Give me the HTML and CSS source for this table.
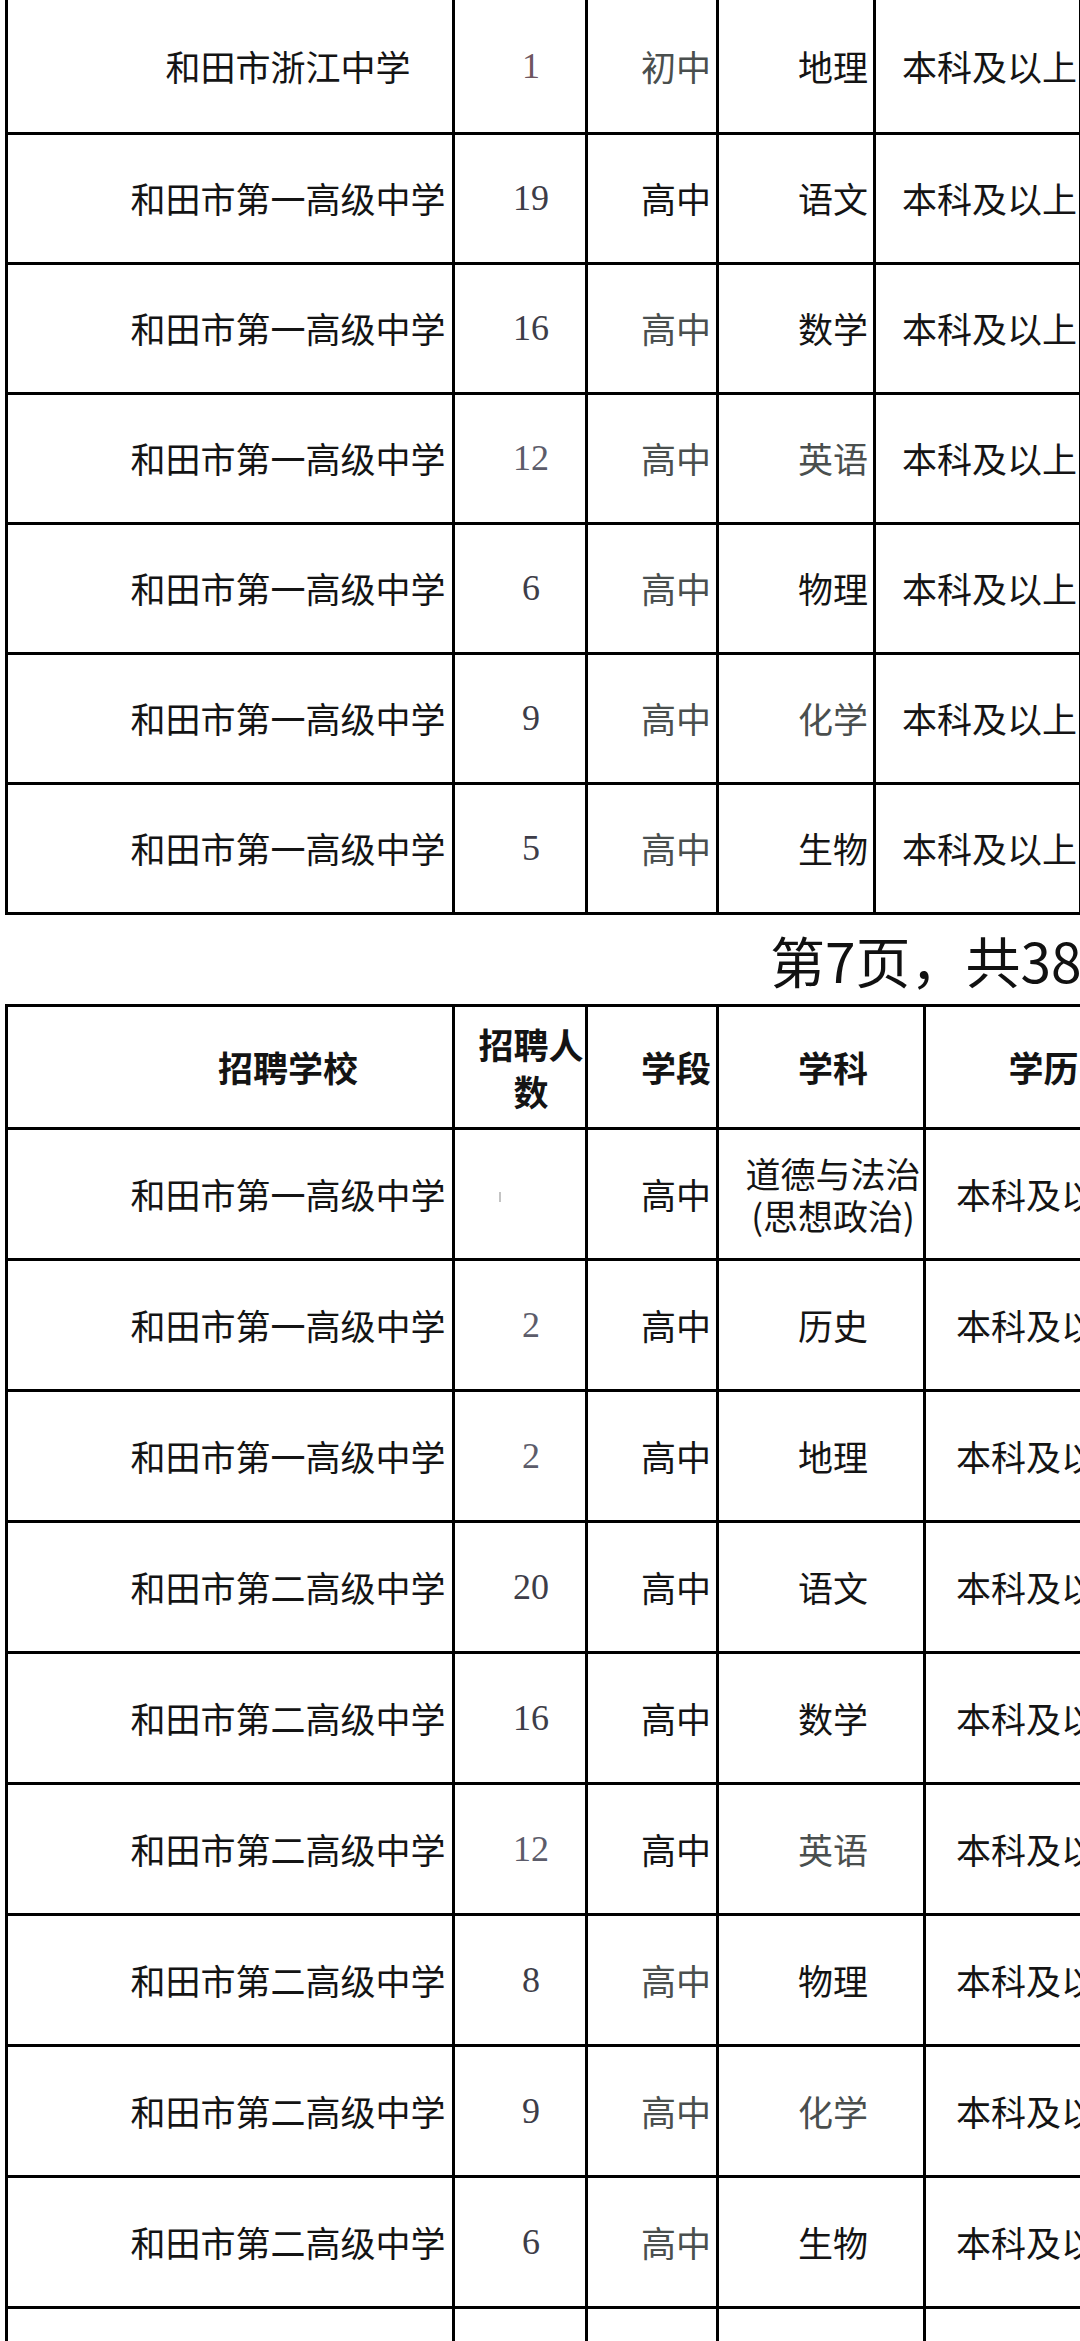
FILE: index.html
```html
<!DOCTYPE html>
<html lang="zh-CN">
<head>
<meta charset="utf-8">
<title>招聘岗位表</title>
<link rel="stylesheet" href="styles.css">
</head>
<body>
<div class="page">
  <table class="grid top">
    <colgroup>
      <col class="c-school"><col class="c-num"><col class="c-stage"><col class="c-subj-top"><col class="c-edu-top">
    </colgroup>
    <tbody>
      <tr class="first"><td class="school">和田市浙江中学</td><td class="num brown">1</td><td class="stage gray">初中</td><td class="subj-r">地理</td><td class="edu">本科及以上</td></tr>
      <tr><td class="school">和田市第一高级中学</td><td class="num">19</td><td class="stage">高中</td><td class="subj-r">语文</td><td class="edu">本科及以上</td></tr>
      <tr><td class="school">和田市第一高级中学</td><td class="num">16</td><td class="stage gray">高中</td><td class="subj-r">数学</td><td class="edu">本科及以上</td></tr>
      <tr><td class="school">和田市第一高级中学</td><td class="num light">12</td><td class="stage gray">高中</td><td class="subj-r gray">英语</td><td class="edu">本科及以上</td></tr>
      <tr><td class="school">和田市第一高级中学</td><td class="num">6</td><td class="stage gray">高中</td><td class="subj-r">物理</td><td class="edu">本科及以上</td></tr>
      <tr><td class="school">和田市第一高级中学</td><td class="num">9</td><td class="stage gray">高中</td><td class="subj-r gray">化学</td><td class="edu">本科及以上</td></tr>
      <tr><td class="school">和田市第一高级中学</td><td class="num">5</td><td class="stage gray">高中</td><td class="subj-r">生物</td><td class="edu">本科及以上</td></tr>
    </tbody>
  </table>

  <div class="pageno">第7页，共38页</div>

  <table class="grid bottom">
    <colgroup>
      <col class="c-school"><col class="c-num"><col class="c-stage"><col class="c-subj"><col class="c-edu">
    </colgroup>
    <thead>
      <tr class="head"><th class="school">招聘学校</th><th class="num-h">招聘人<br>数</th><th class="stage">学段</th><th class="subj">学科</th><th class="edu">学历</th></tr>
    </thead>
    <tbody>
      <tr><td class="school">和田市第一高级中学</td><td class="num"><span class="tick"></span></td><td class="stage">高中</td><td class="subj two">道德与法治<br>(思想政治)</td><td class="edu">本科及以上</td></tr>
      <tr><td class="school">和田市第一高级中学</td><td class="num light">2</td><td class="stage">高中</td><td class="subj">历史</td><td class="edu">本科及以上</td></tr>
      <tr><td class="school">和田市第一高级中学</td><td class="num light">2</td><td class="stage">高中</td><td class="subj">地理</td><td class="edu">本科及以上</td></tr>
      <tr><td class="school">和田市第二高级中学</td><td class="num">20</td><td class="stage">高中</td><td class="subj">语文</td><td class="edu">本科及以上</td></tr>
      <tr><td class="school">和田市第二高级中学</td><td class="num">16</td><td class="stage">高中</td><td class="subj">数学</td><td class="edu">本科及以上</td></tr>
      <tr><td class="school">和田市第二高级中学</td><td class="num light">12</td><td class="stage">高中</td><td class="subj gray">英语</td><td class="edu">本科及以上</td></tr>
      <tr><td class="school">和田市第二高级中学</td><td class="num">8</td><td class="stage gray">高中</td><td class="subj">物理</td><td class="edu">本科及以上</td></tr>
      <tr><td class="school">和田市第二高级中学</td><td class="num">9</td><td class="stage gray">高中</td><td class="subj gray">化学</td><td class="edu">本科及以上</td></tr>
      <tr><td class="school">和田市第二高级中学</td><td class="num">6</td><td class="stage gray">高中</td><td class="subj">生物</td><td class="edu">本科及以上</td></tr>
      <tr><td class="school"></td><td class="num"></td><td class="stage"></td><td class="subj"></td><td class="edu"></td></tr>
    </tbody>
  </table>
</div>
</body>
</html>
```

FILE: styles.css
```css
html, body {
  margin: 0;
  padding: 0;
  background: #ffffff;
}

body {
  width: 1080px;
  height: 2341px;
  overflow: hidden;
  font-family: "Noto Sans CJK SC", "Noto Sans", sans-serif;
  color: #141414;
}

.page {
  width: 1300px;
  padding-left: 5px;
}

.grid {
  border-collapse: collapse;
  table-layout: fixed;
  font-size: 35px;
  line-height: 42px;
}

.grid td,
.grid th {
  border: 3px solid #000000;
  padding: 0;
  vertical-align: middle;
  white-space: nowrap;
  overflow: visible;
}

.top {
  width: 1074px;
}

.top tr {
  height: 130px;
}

.top tr.first {
  height: 133px;
}

.top tr.first td {
  border-top: none;
}

.bottom {
  width: 1132px;
}

.bottom tr {
  height: 131px;
}

.bottom tr.head {
  height: 123px;
}

.c-school { width: 447px; }
.c-num { width: 133px; }
.c-stage { width: 131px; }
.c-subj-top { width: 157px; }
.c-edu-top { width: 206px; }
.c-subj { width: 207px; }
.c-edu { width: 214px; }

.school {
  text-align: center;
  padding-left: 118px !important;
  padding-right: 2px !important;
}

.num {
  text-align: center;
  padding-left: 22px !important;
  font-family: "Liberation Serif", "DejaVu Serif", serif;
  font-size: 36px;
  color: #3d3d48;
}

.num.light {
  color: #5c5c6a;
}

.num.brown {
  color: #6e5660;
}

.stage {
  text-align: right;
  padding-right: 5px !important;
}

.subj-r {
  text-align: right;
  padding-right: 5px !important;
}

.subj {
  text-align: center;
  padding-left: 24px !important;
}

.edu {
  text-align: center;
  padding-left: 24px !important;
}

.gray {
  color: #4a4f4e;
}

th {
  font-weight: 700;
}

.num-h {
  text-align: center;
  padding-left: 22px !important;
  line-height: 47px;
}

.tick {
  display: inline-block;
  width: 2px;
  height: 10px;
  background: #c4c4c4;
  margin-right: 62px;
  vertical-align: middle;
}

.pageno {
  height: 89px;
  padding-left: 765px;
  font-size: 55px;
  line-height: 89px;
  white-space: nowrap;
  color: #111111;
}
```
